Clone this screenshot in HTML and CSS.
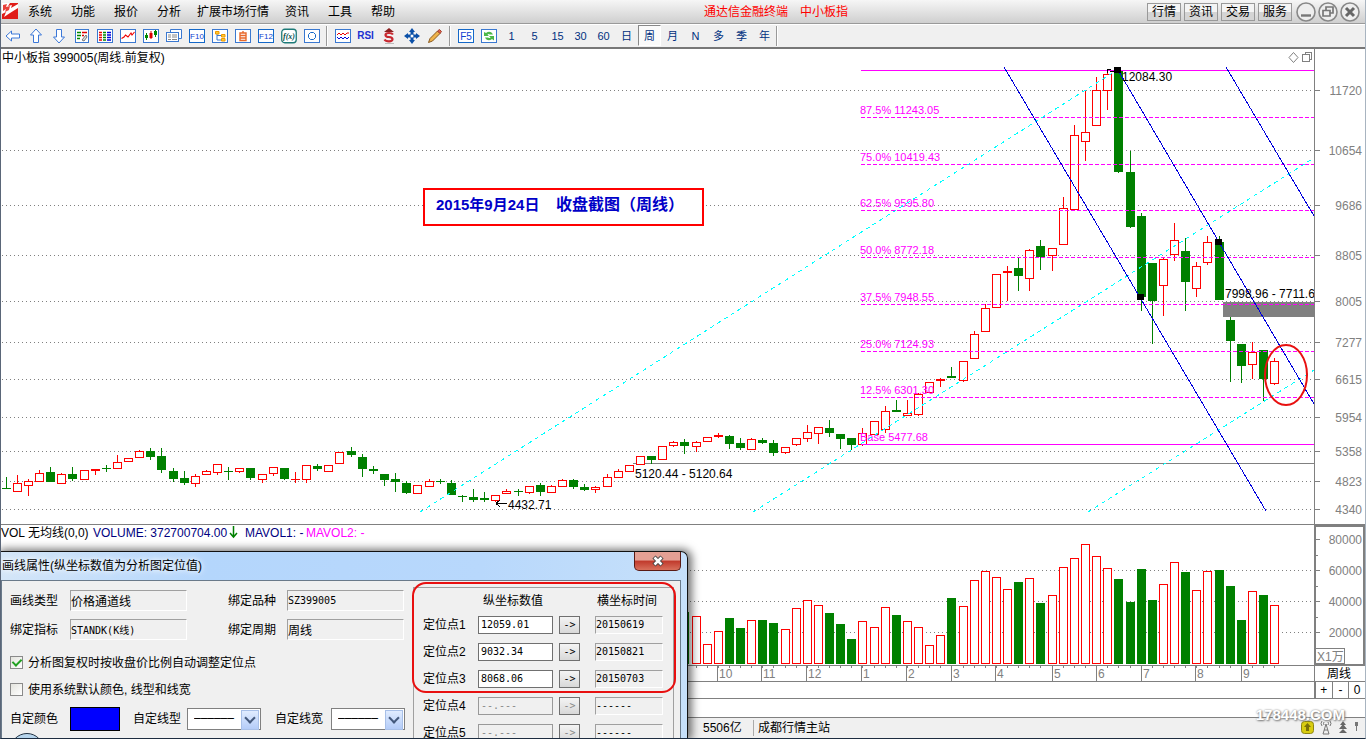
FILE: index.html
```html
<!DOCTYPE html>
<html lang="zh-CN">
<head>
<meta charset="utf-8">
<title>通达信金融终端</title>
<link rel="stylesheet" href="styles.css">
</head>
<body>
<div class="window">
  <header class="menubar">
    <svg class="logo" width="16" height="16" viewBox="0 0 16 16"><rect width="16" height="16" fill="#e01c18"/><path d="M0 0H8L6 3L10 2L9 5L16 1V5L8 10L2 14L4 9L0 11Z" fill="#fff"/><path d="M1 2L5 1L4 4L8 3L7 7L3 9L4 6L1 8Z" fill="#e8403a"/></svg>
    <nav class="menus">
      <button>系统</button><button>功能</button><button>报价</button><button>分析</button><button class="menu-wide">扩展市场行情</button><button>资讯</button><button>工具</button><button>帮助</button>
    </nav>
    <div class="caption"><span>通达信金融终端</span><span>中小板指</span></div>
    <div class="quick">
      <button>行情</button><button>资讯</button><button>交易</button><button>服务</button>
    </div>
    <div class="winbtns">
      <button aria-label="最小化"><svg width="20" height="20" viewBox="0 0 20 20"><circle cx="10" cy="10" r="9" fill="#eee" stroke="#888" stroke-width="1.6"/><path d="M5 13.5H15" stroke="#777" stroke-width="2.4"/></svg></button>
      <button aria-label="还原"><svg width="20" height="20" viewBox="0 0 20 20"><circle cx="10" cy="10" r="9" fill="#eee" stroke="#888" stroke-width="1.6"/><path d="M8 8V5H15V11H12M5 8.5H12V14H5Z" fill="none" stroke="#777" stroke-width="1.7"/></svg></button>
      <button aria-label="关闭"><svg width="20" height="20" viewBox="0 0 20 20"><circle cx="10" cy="10" r="9" fill="#eee" stroke="#888" stroke-width="1.6"/><path d="M6 6L14 14M14 6L6 14" stroke="#666" stroke-width="3"/></svg></button>
    </div>
  </header>

  <div class="toolbar">
    <button aria-label="后退"><svg viewBox="0 0 16 16"><path d="M1 8L6.500 3V6H14.500V10H6.500V13Z" fill="#fff" stroke="#3c78d8"/></svg></button>
    <button aria-label="上翻"><svg viewBox="0 0 16 16"><path d="M8 1L13.500 7H10.500V14.500H5.500V7H2.500Z" fill="#fff" stroke="#3c78d8"/></svg></button>
    <button aria-label="下翻"><svg viewBox="0 0 16 16"><path d="M8 15L13.500 9H10.500V1.500H5.500V9H2.500Z" fill="#fff" stroke="#3c78d8"/></svg></button>
    <button aria-label="自选"><svg viewBox="0 0 16 16"><rect x="1.500" y="1.500" width="13" height="13" fill="#fff" stroke="#3a78d0"/><path d="M3 4.500H7M3 7.500H7M3 10.500H6" stroke="#080" stroke-width="1.500"/><path d="M8 4.500H13M8 7.500H10" stroke="#d00" stroke-width="1.500"/><path d="M8 12L12 7L13 9L10 13Z" fill="#ddd" stroke="#777"/></svg></button>
    <button aria-label="行情表"><svg viewBox="0 0 16 16"><rect x=".5" y="1.500" width="15" height="13" fill="#fff" stroke="#3a78d0"/><path d="M2 4.500H5M2 7H5M2 9.500H5M2 12H5" stroke="#e00" stroke-width="1.500"/><path d="M6 4.500H9M6 7H9M6 9.500H9M6 12H9" stroke="#080" stroke-width="1.500"/><path d="M10 4.500H14M10 7H14M10 9.500H14M10 12H14" stroke="#00d" stroke-width="1.500"/></svg></button>
    <button aria-label="分时图"><svg viewBox="0 0 16 16"><rect x=".5" y="1.500" width="15" height="13" fill="#fff" stroke="#3a78d0"/><path d="M1.500 10.500L4 9L5.500 7L8 9L11 5L12 7L14.500 4" fill="none" stroke="#e00" stroke-width="1.100"/></svg></button>
    <button aria-label="K线图"><svg viewBox="0 0 16 16"><rect x=".5" y="1.500" width="15" height="13" fill="#fff" stroke="#3a78d0"/><path d="M3.500 5V12M12.500 2V9" stroke="#080"/><path d="M8 3V11" stroke="#d00"/><path d="M2 7H5V10H2ZM11 3H14V7H11Z" fill="#080"/><path d="M6.500 5H9.500V10H6.500Z" fill="#d00"/></svg></button>
    <button aria-label="多窗口"><svg viewBox="0 0 16 16"><path d="M4.500 4V1.500H15.500V10.500H13" fill="#fff" stroke="#3a78d0"/><rect x=".5" y="4.500" width="12" height="9" fill="#fff" stroke="#3a78d0"/><path d="M2 7H5M6 7H11M2 9H5M6 9H11M2 11.500H5M6 11.500H11" stroke="#888"/></svg></button>
    <button aria-label="F10"><svg viewBox="0 0 16 16"><rect x=".5" y="1.500" width="15" height="13" fill="#fff" stroke="#1468c8"/><text x="8" y="11" class="fkey">F10</text></svg></button>
    <button aria-label="板块树"><svg viewBox="0 0 16 16"><rect x=".5" y="1.500" width="15" height="13" fill="#fff" stroke="#3a78d0"/><path d="M5 6V12H9M5 7.500H9" fill="none" stroke="#3a78d0"/><path d="M3.500 3.500H7V6H3.500ZM9.500 6.500H13V9H9.500ZM9.500 10.500H13V13H9.500Z" fill="#fc3" stroke="#e90"/></svg></button>
    <button aria-label="自选股"><svg viewBox="0 0 16 16"><rect x=".5" y="1.500" width="15" height="13" fill="#fff" stroke="#3a78d0"/><path d="M8 3V5M5 5H11V12.500H5ZM5 7.500H11M5 10H11" fill="none" stroke="#e8692c" stroke-width="1.400"/></svg></button>
    <button aria-label="F12"><svg viewBox="0 0 16 16"><rect x=".5" y="1.500" width="15" height="13" fill="#fff" stroke="#1468c8"/><text x="8" y="11" class="fkey">F12</text></svg></button>
    <button aria-label="公式"><svg viewBox="0 0 16 16"><rect x=".75" y="1.250" width="14.500" height="13.500" rx="3" fill="#fff" stroke="#1d7a78" stroke-width="1.300"/><text x="8" y="11" class="fx">f(x)</text></svg></button>
    <button aria-label="圆"><svg viewBox="0 0 16 16"><rect x=".5" y="1.500" width="15" height="13" fill="#fff" stroke="#3a78d0"/><path d="M6.500 4.500H9.500L11.500 6.500V9.500L9.500 11.500H6.500L4.500 9.500V6.500Z" fill="none" stroke="#1468c8"/></svg></button>
    <i class="sep"></i>
    <button aria-label="叠加"><svg viewBox="0 0 16 16"><rect x=".5" y="1.500" width="15" height="13" fill="#fff" stroke="#3a78d0"/><path d="M2 7L4 5L6 7L8 5L10 7L12 5L14 5" fill="none" stroke="#e00"/><path d="M2 9L4 11L6 9L8 11L10 9L12 11L14 9" fill="none" stroke="#00d"/></svg></button>
    <button class="rsi">RSI</button>
    <button aria-label="资金"><svg viewBox="0 0 16 16"><path d="M8 0L13 4H3Z" fill="#8c2020"/><path d="M12 6.500Q11 5 8 5Q4.500 5 4.500 7Q4.500 9 8 9Q11.500 9.300 11.500 11.300Q11.500 13.300 8 13.300Q4.500 13.300 3.500 11.500" fill="none" stroke="#c82830" stroke-width="2.200"/><path d="M4 15.500H13" stroke="#bbb"/></svg></button>
    <button aria-label="移动"><svg viewBox="0 0 16 16"><path d="M8 0L11 4H9.500V6.500H12V5L16 8L12 11V9.500H9.500V12H11L8 16L5 12H6.500V9.500H4V11L0 8L4 5V6.500H6.500V4H5Z" fill="#0b50a8"/><circle cx="8" cy="8" r="1.500" fill="#fff"/></svg></button>
    <button aria-label="画线"><svg viewBox="0 0 16 16"><path d="M1.500 14.500L3 10.500L10.500 3L13 5.500L5.500 13Z" fill="#f0b44c" stroke="#8a5a20"/><path d="M10.500 3L12.500 1.500L14.500 3.500L13 5.500Z" fill="#e0604a" stroke="#a04030"/></svg></button>
    <i class="sep"></i>
    <button aria-label="F5"><svg viewBox="0 0 16 16"><rect x=".5" y="1.500" width="15" height="13" fill="#fff" stroke="#1468c8"/><text x="8" y="12" class="fkey f5">F5</text></svg></button>
    <button aria-label="刷新"><svg viewBox="0 0 16 16"><rect x=".5" y="1.500" width="15" height="13" fill="#fff" stroke="#3a78d0"/><path d="M3 8V4L5 5C8 2.500 11 4 12 6.500H9C7 5.500 7 6 6.500 6.500L8 8ZM13 8V12.500L11 11C8 13.500 5 12 4 9.500H7C9 10.500 9 10 9.500 9.500L8 8Z" fill="#4db848"/></svg></button>
    <button>1</button><button>5</button><button>15</button><button>30</button><button>60</button><button>日</button><button class="pressed">周</button><button>月</button><button>N</button><button>多</button><button>季</button><button>年</button>
    <i class="sep sep-end"></i>
  </div>

  <svg id="price" class="chart" viewBox="1 49 1364 475" role="img" aria-label="中小板指周线图"></svg>
  <svg id="volume" class="chart" viewBox="1 524 1364 158" role="img" aria-label="成交量"></svg>

  <div class="zoomrow">
    <div class="zoombtns"><button>+</button><button>-</button><button>0</button></div>
  </div>
  <div class="blankrow"></div>
  <footer class="status">
    <span class="turnover">5506亿</span>
    <span class="host">成都行情主站</span>
    <span class="tray">
      <svg width="13" height="14" viewBox="0 0 13 14"><rect x=".5" y=".5" width="12" height="12" rx="3" fill="#d8cc10" stroke="#8c8410"/><path d="M6.500 2L10 6H8V10H5V6H3Z" fill="#7a7008"/></svg>
      <svg width="12" height="16" viewBox="0 0 12 16"><path d="M6 4L3 14H9L6 4M4 10H8M2 1Q0 3.500 2 6M10 1Q12 3.500 10 6M4 2Q3 3.500 4 5M8 2Q9 3.500 8 5" fill="none" stroke="#777"/></svg>
      <svg width="10" height="14" viewBox="0 0 10 14"><path d="M5 0L8 4H2ZM5 3L9 8H1ZM5 8L9 12H1Z" fill="#666"/></svg>
      <svg width="5" height="14" viewBox="0 0 5 14"><path d="M1 1H4V5H1ZM2 5H3V10H2Z" fill="#777"/></svg>
    </span>
  </footer>
  <div class="watermark">178448.COM</div>

  <section class="dialog">
    <div class="dlg-title"><h1>画线属性(纵坐标数值为分析图定位值)</h1>
      <button class="dlg-close" aria-label="关闭"><svg width="14" height="12" viewBox="0 0 14 12"><path d="M3 2L11 10M11 2L3 10" stroke="#444" stroke-width="4.500"/><path d="M3.500 2.500L10.500 9.500M10.500 2.500L3.500 9.500" stroke="#fff" stroke-width="2.500"/></svg></button>
    </div>
    <div class="dlg-body">
      <div class="left">
        <div class="pair">
          <label for="kind">画线类型</label><input id="kind" class="field" readonly value="价格通道线">
          <label for="code" class="second">绑定品种</label><input id="code" class="field mono" readonly value="SZ399005">
        </div>
        <div class="pair">
          <label for="ind">绑定指标</label><input id="ind" class="field mono" readonly value="STANDK(K线)">
          <label for="per" class="second">绑定周期</label><input id="per" class="field" readonly value="周线">
        </div>
        <div class="checks">
          <label><input type="checkbox" checked>分析图复权时按收盘价比例自动调整定位点</label>
          <label><input type="checkbox">使用系统默认颜色, 线型和线宽</label>
        </div>
        <div class="custom">
          <label for="color">自定颜色</label><button id="color" class="swatch"></button>
          <label for="style" class="lstyle">自定线型</label>
          <span class="combo"><select id="style"><option>──────</option></select></span>
          <label for="width" class="lwidth">自定线宽</label>
          <span class="combo"><select id="width"><option>──────</option></select></span>
        </div>
        <div class="orb"></div>
      </div>
      <div class="points">
        <div class="phead"><span>纵坐标数值</span><span>横坐标时间</span></div>
        <div class="prow"><label for="p1">定位点1</label><input id="p1" class="num" value="12059.01"><button>-&gt;</button><input class="field mono" readonly aria-label="时间1" value="20150619"></div>
        <div class="prow"><label for="p2">定位点2</label><input id="p2" class="num" value="9032.34"><button>-&gt;</button><input class="field mono" readonly aria-label="时间2" value="20150821"></div>
        <div class="prow"><label for="p3">定位点3</label><input id="p3" class="num" value="8068.06"><button>-&gt;</button><input class="field mono" readonly aria-label="时间3" value="20150703"></div>
        <div class="prow"><label for="p4">定位点4</label><input id="p4" class="num" disabled value="--.---"><button disabled>-&gt;</button><input class="field mono" readonly aria-label="时间4" value="------"></div>
        <div class="prow"><label for="p5">定位点5</label><input id="p5" class="num" disabled value="--.---"><button disabled>-&gt;</button><input class="field mono" readonly aria-label="时间5" value="------"></div>
        <div class="marker"></div>
      </div>
    </div>
  </section>
</div>
<script src="chart.js"></script>
</body>
</html>
```
FILE: styles.css
```css
* { box-sizing: border-box; }
body {
  margin: 0;
  overflow: hidden;
  background: #fff;
  font: 12px/16px "Liberation Sans", "Noto Sans CJK SC", sans-serif;
  color: #000;
}
button, input, select { font: inherit; color: inherit; margin: 0; padding: 0; border: 0; background: none; border-radius: 0; }
.window {
  position: relative;
  display: flex;
  flex-direction: column;
  min-height: 100vh;
  overflow: hidden;
  border-left: 1px solid #5a6678;
  border-right: 1px solid #a8b4c0;
  border-bottom: 1px solid #1c2c40;
}

/* menu bar */
.menubar {
  display: flex;
  align-items: center;
  height: 24px;
  background: linear-gradient(#f6f6f6, #cfcfcf);
  border-bottom: 1px solid #9a9a9a;
}
.logo { margin: 0 10px 2px 1px; }
.menus { display: flex; gap: 19px; }
.menu-wide { margin: 0 -3px; }
.caption { flex: 1; display: flex; justify-content: center; gap: 12px; padding-left: 10px; color: #f00; }
.quick { display: flex; gap: 3px; }
.quick button {
  width: 34px;
  height: 18px;
  border: 1px solid #999;
  background: linear-gradient(#f4f4f4 50%, #d4d4d4 50%);
  line-height: 16px;
}
.winbtns { display: flex; gap: 2px; margin: 0 5px 0 4px; }
.winbtns svg { display: block; }

/* toolbar */
.toolbar {
  display: flex;
  height: 25px;
  background: #f0f0f0;
  border-top: 1px solid #fff;
  border-bottom: 2px solid #777;
}
.toolbar button {
  width: 23px;
  height: 21px;
  display: flex;
  align-items: center;
  justify-content: center;
  font-size: 11px;
  color: #003080;
}
.toolbar svg { width: 16px; height: 16px; }
.toolbar .rsi { font-weight: bold; font-size: 10px; color: #2030d0; }
.toolbar .pressed { background: #fafafa; border: 1px solid #fff; border-left-color: #888; border-top-color: #888; }
.sep { width: 2px; height: 20px; margin: 1px 3px; border-left: 1px solid #999; border-right: 1px solid #fff; }
.sep-end { margin-left: 0; }
.fkey { font: 8px "Liberation Sans", sans-serif; fill: #1040d0; text-anchor: middle; }
.f5 { font-size: 10px; }
.fx { font: italic bold 8px "Liberation Serif", serif; fill: #004c4c; text-anchor: middle; }

/* charts */
.chart { display: block; width: 100%; height: auto; }
.chart text { font: 12px "Liberation Sans", "Noto Sans CJK SC", sans-serif; }
.chart text.lvl { font-size: 11px; fill: #f0f; }
.chart text.axis { fill: #808080; text-anchor: end; }
.chart text.month { fill: #808080; }
.chart text.note1 { font-size: 15px; font-weight: bold; fill: #0000c8; }
.chart text.note2 { font-size: 16px; font-weight: bold; fill: #0000c8; }
.crisp { shape-rendering: crispEdges; }
.grid { stroke: #808080; stroke-dasharray: 1 3; }
.frame { stroke: #808080; fill: none; }
.up { stroke: #f00; fill: #fff; }
.down { stroke: #008000; fill: #008000; }

/* rows below the charts */
.zoomrow { display: flex; justify-content: flex-end; height: 17px; border-bottom: 1px solid #808080; }
.zoombtns { display: flex; width: 51px; border-left: 2px solid #808080; }
.zoombtns button { flex: 1; border-left: 1px solid #808080; line-height: 15px; font-size: 12px; }
.zoombtns button:first-child { border-left: 0; }
.blankrow { height: 19px; border-bottom: 1px solid #808080; }
.status { flex: 1; display: flex; align-items: center; min-height: 20px; background: #f0f0f0; padding-left: 702px; }
.turnover { width: 51px; border-right: 1px solid #aaa; }
.host { padding-left: 4px; }
.tray { margin-left: auto; display: flex; gap: 6px; align-items: center; padding-right: 6px; }
.tray svg { display: block; }
.watermark {
  position: absolute;
  right: 20px;
  bottom: 12px;
  font: bold 15px/22px "Liberation Sans", sans-serif;
  color: #fff;
  text-shadow: 0 0 2px #888, 1px 1px 2px #777;
}

/* line properties dialog */
.dialog {
  position: absolute;
  left: -1px;
  top: 551px;
  bottom: 0;
  width: 688px;
  border: 1px solid #111;
  border-width: 1px 1px 0 0;
  border-radius: 0 7px 0 0;
  background: linear-gradient(90deg, #d4e6f8, #b4d6fc 30%, #b8d8fc 70%, #c6e0fa);
  box-shadow: 2px 0 8px 2px rgba(0, 0, 0, .55);
  padding: 0 6px 0 1px;
  display: flex;
  flex-direction: column;
}
.dlg-title { display: flex; justify-content: space-between; height: 28px; }
.dlg-title h1 { margin: 6px 0 0 1px; font-size: 12px; font-weight: normal; line-height: 16px; text-shadow: 0 0 5px #fff, 0 0 8px #fff; }
.dlg-close {
  width: 47px;
  height: 19px;
  border: 1px solid #5a1a14;
  border-top: 0;
  border-radius: 0 0 5px 5px;
  background: linear-gradient(#e4a094 45%, #c0392b 50%, #d8705c);
  display: flex;
  align-items: center;
  justify-content: center;
}
.dlg-body {
  flex: 1;
  min-height: 0;
  overflow: hidden;
  display: flex;
  align-items: flex-start;
  background: #f0f0f0;
  border: 1px solid #6a7a8a;
  border-bottom: 0;
}
.left { position: relative; width: 411px; padding: 9px 8px 0 8px; display: flex; flex-direction: column; gap: 8px; }
.pair, .custom { display: flex; align-items: center; }
.pair label { width: 60px; }
.pair .second { width: 59px; margin-left: 41px; }
.field {
  width: 117px;
  height: 21px;
  border: 1px solid #fff;
  border-left-color: #a0a0a0;
  border-top-color: #a0a0a0;
}
.mono { font: 10px/16px "DejaVu Sans Mono", "Noto Sans CJK SC", monospace; }
.checks { display: flex; flex-direction: column; gap: 8px; margin-top: 5px; }
.checks label { display: flex; align-items: center; height: 19px; gap: 5px; }
.checks input {
  appearance: none;
  width: 13px;
  height: 13px;
  border: 1px solid #8a8a8a;
  background: linear-gradient(135deg, #e4e4de, #fff);
  display: grid;
  place-items: center;
}
.checks input:checked::before {
  content: "";
  width: 4px;
  height: 7px;
  margin-bottom: 2px;
  border: solid #21a121;
  border-width: 0 2px 2px 0;
  transform: rotate(45deg);
}
.custom { height: 24px; }
.swatch { width: 50px; height: 24px; margin-left: 12px; background: #00f; border: 1px solid #000; }
.lstyle { margin: 0 6px 0 13px; }
.lwidth { margin: 0 8px 0 14px; }
.combo { position: relative; display: block; width: 74px; height: 22px; }
.combo select {
  appearance: none;
  width: 100%;
  height: 22px;
  border: 1px solid #808080;
  background: #fff;
  padding-left: 6px;
  font: 11px/18px "DejaVu Sans Mono", monospace;
}
.combo::before {
  content: "";
  position: absolute;
  right: 2px;
  top: 2px;
  width: 16px;
  height: 18px;
  border: 1px solid #a8c0e8;
  background: linear-gradient(#e0ecff, #b4ccf8);
}
.combo::after {
  content: "";
  position: absolute;
  right: 7px;
  top: 6px;
  width: 6px;
  height: 6px;
  border: solid #44597c;
  border-width: 0 2px 2px 0;
  transform: rotate(45deg);
}
.orb { position: absolute; left: 8px; top: 152px; width: 34px; height: 34px; border-radius: 50%; border: 1px solid #234; background: linear-gradient(#bcd8ee, #7cb0d8); }
.points { position: relative; width: 261px; margin-top: 6px; border: 1px solid #a0a0a0; border-bottom: 0; padding-left: 9px; }
.phead { display: flex; height: 23px; line-height: 26px; padding-left: 60px; gap: 54px; }
.prow { display: flex; align-items: center; height: 27px; }
.prow label { width: 55px; }
.num {
  width: 75px;
  height: 18px;
  border: 1px solid #707070;
  background: #fff;
  padding-left: 2px;
  font: 10px/16px "DejaVu Sans Mono", monospace;
}
.prow button {
  width: 21px;
  height: 18px;
  margin: 0 15px 0 6px;
  border: 1px solid #707070;
  background: linear-gradient(#f4f4f4, #d8d8d8);
  font: 10px/14px "DejaVu Sans Mono", monospace;
}
.prow .field { width: 68px; height: 18px; }
.num:disabled { background: #f0f0f0; color: #888; border-color: #999; }
.prow button:disabled { color: #888; }
.marker { position: absolute; left: -2px; top: -6px; width: 264px; height: 111px; border: 2px solid #e81010; border-radius: 14px; pointer-events: none; }
```
FILE: chart.js
```js
// Weekly candles: [centre x, high, body top, body bottom, low, u(p)/d(own)]
const candles = [
[6,477,488,489,489,'d'],[17,475,483,492,492,'u'],[28,479,481,486,496,'u'],[39,470,473,482,482,'u'],[50,467,472,482,482,'d'],
[61,473,474,484,484,'u'],[72,467,474,479,481,'d'],[84,470,470,480,480,'u'],[95,469,469,471,475,'u'],[106,465,468,469,472,'d'],
[117,455,462,469,469,'u'],[128,458,458,462,462,'u'],[139,450,451,458,458,'u'],[150,448,451,457,460,'d'],[161,448,456,470,473,'d'],
[173,468,471,479,482,'d'],[184,471,478,483,485,'d'],[195,474,476,484,487,'u'],[206,470,471,475,475,'u'],[217,464,464,473,475,'u'],
[228,467,471,472,480,'d'],[239,468,468,472,473,'u'],[250,468,468,478,480,'d'],[262,474,474,480,483,'u'],[273,467,467,474,476,'u'],
[284,468,468,479,480,'d'],[295,472,479,480,483,'u'],[306,465,465,480,483,'u'],[317,464,466,469,471,'d'],[328,465,465,472,472,'u'],
[339,452,452,464,464,'u'],[351,447,451,455,457,'d'],[362,454,457,469,477,'d'],[373,466,469,471,474,'d'],[384,474,474,480,486,'d'],
[395,473,479,482,492,'d'],[406,481,483,493,494,'d'],[417,485,485,494,494,'u'],[429,479,481,487,487,'u'],[440,479,481,482,484,'d'],
[451,480,483,495,495,'d'],[462,495,496,497,502,'d'],[473,489,497,500,502,'d'],[484,492,498,500,502,'d'],[495,495,495,501,502,'u'],
[506,489,491,494,494,'u'],[518,489,491,492,496,'d'],[529,486,486,493,494,'u'],[540,483,485,492,496,'d'],[551,485,486,493,493,'u'],
[562,479,480,487,487,'u'],[573,479,480,487,489,'d'],[584,484,487,490,491,'d'],[595,486,487,490,493,'u'],[607,474,477,487,487,'u'],
[618,469,471,478,478,'u'],[629,465,465,472,472,'u'],[640,456,456,465,465,'u'],[651,456,456,460,464,'d'],[662,446,446,460,460,'u'],
[673,441,442,446,447,'u'],[684,439,442,446,454,'d'],[696,441,442,447,452,'u'],[707,437,437,442,442,'u'],[718,433,435,437,438,'u'],
[729,435,436,444,449,'d'],[740,438,443,448,450,'d'],[751,438,439,450,450,'u'],[762,438,440,443,444,'d'],[773,440,443,453,456,'d'],
[785,447,447,453,454,'u'],[796,438,438,445,446,'u'],[807,425,432,439,442,'u'],[818,427,427,434,444,'u'],[829,420,428,433,437,'d'],
[840,434,434,439,449,'d'],[851,438,438,445,450,'d'],[862,428,433,445,446,'u'],[874,421,421,435,435,'u'],[885,406,411,430,433,'u'],
[896,400,410,412,412,'d'],[907,400,413,416,416,'u'],[918,393,394,415,416,'u'],[929,382,382,393,393,'u'],[940,378,379,381,387,'u'],
[951,367,376,378,378,'d'],[963,361,361,381,382,'u'],[974,331,334,359,359,'u'],[985,304,308,332,332,'u'],[996,274,274,308,308,'u'],
[1007,266,271,273,301,'u'],[1018,258,268,276,291,'d'],[1029,249,250,279,291,'u'],[1040,240,246,257,270,'d'],[1052,248,248,256,271,'u'],
[1063,197,208,245,245,'u'],[1074,125,135,210,210,'u'],[1085,91,132,142,161,'u'],[1096,77,90,126,126,'u'],[1107,71,74,91,110,'u'],
[1118,71,71,172,173,'d'],[1130,151,172,227,228,'d'],[1141,213,216,297,311,'d'],[1152,263,263,301,344,'d'],[1163,257,259,286,316,'u'],
[1174,223,240,255,261,'u'],[1185,238,251,282,311,'d'],[1196,262,266,289,297,'u'],[1207,236,242,263,265,'u'],[1219,236,242,300,300,'d'],
[1230,317,320,341,382,'d'],[1241,344,344,366,383,'d'],[1252,342,352,365,379,'u'],[1263,350,350,379,401,'d'],[1274,358,361,384,385,'u']
];
// Bar tops for the last weeks, aligned with the end of the candle list
const volumes = [612,616,644,631,618,628,620,620,623,629,608,600,605,613,624,639,621,627,607,615,621,627,645,635,598,606,580,571,577,589,582,578,603,595,567,558,544,556,568,579,602,569,600,584,562,572,590,571,570,586,620,591,595,605];

const line = (x1, y1, x2, y2, cls, extra = '') => `<path class="${cls}" d="M${x1} ${y1}L${x2} ${y2}" fill="none" ${extra}/>`;
const h = (y, x1, x2, cls, extra) => line(x1, y + .5, x2, y + .5, 'crisp ' + cls, extra);
const v = (x, y1, y2, cls, extra) => line(x + .5, y1, x + .5, y2, 'crisp ' + cls, extra);
const text = (x, y, s, cls = '', extra = '') => `<text x="${x}" y="${y}" class="${cls}" ${extra}>${s}</text>`;

let p = '';
[[90, 11720], [150, 10654], [205, 9686], [255, 8805], [301, 8005], [342, 7277], [379, 6615], [417, 5954], [451, 5358], [481, 4823], [509, 4340]].forEach(([y, n]) => {
  p += h(y, 2, 1314, 'grid') + h(y, 1315, 1320, 'frame') + text(1362, y + 5, n, 'axis');
});
p += h(463, 633, 1314, 'frame');
p += '<rect x="1223" y="302" width="91" height="15" fill="#808080"/>';
candles.forEach(([x, hi, t, b, lo, k]) => {
  const c = k === 'u' ? 'up' : 'down';
  p += v(x, hi, lo, c);
  p += b - t < 2 ? h(t, x - 4, x + 5, c)
    : `<rect class="crisp ${c}" x="${x - 3.5}" y="${t + .5}" width="8" height="${b - t - 1}"/>`;
});
p += h(70, 861, 1314, '', 'stroke="#f0f"') + h(444, 861, 1314, '', 'stroke="#f0f"');
[[117, '87.5% 11243.05'], [164, '75.0% 10419.43'], [210, '62.5% 9595.80'], [257, '50.0% 8772.18'], [304, '37.5% 7948.55'], [351, '25.0% 7124.93'], [397, '12.5% 6301.30']].forEach(([y, s]) => {
  p += h(y, 861, 1314, '', 'stroke="#f0f" stroke-dasharray="4 2"') + text(860, y - 3, s, 'lvl');
});
p += text(860, 441, 'Base 5477.68', 'lvl');
[[420, 512, 1117, 70], [753, 512, 1314, 158], [1088, 512, 1314, 370]].forEach(a => {
  p += line(...a, 'crisp', 'stroke="#0ff" stroke-dasharray="4 4"');
});
[[1004, 67, 1266, 511], [1118, 70, 1314, 404], [1226, 67, 1314, 216]].forEach(a => {
  p += line(...a, 'crisp', 'stroke="#00d"');
});
[[1114, 67], [1137, 294], [1215, 239]].forEach(([x, y]) => { p += `<rect x="${x}" y="${y}" width="7" height="6"/>`; });
p += text(1122, 81, '12084.30') + text(508, 509, '4432.71') + text(635, 478, '5120.44 - 5120.64');
p += '<path d="M507 503.500H496M496 503.500L500 500M496 503.500L500 507M1107 73V69H1111M1110 71H1114" fill="none" stroke="#000" class="crisp"/>';
p += text(1225, 298, '7998.96 - 7711.65', '', 'clip-path="url(#plot)"') + '<clipPath id="plot"><rect x="0" y="49" width="1314" height="475"/></clipPath>';
p += '<ellipse cx="1286" cy="375" rx="21" ry="30" fill="none" stroke="#e81010" stroke-width="2"/>';
p += '<rect x="424" y="189" width="279" height="36" fill="#fff" stroke="#f00" stroke-width="2" class="crisp"/>';
p += text(436, 210, '2015年9月24日', 'note1') + text(556, 210, '收盘截图（周线）', 'note2');
p += text(2, 62, '中小板指 399005(周线.前复权)');
p += '<path d="M1293.500 52.500L1298 57.500L1293.500 62.500L1289 57.500Z" fill="none" stroke="#808080"/><path d="M1302.500 54.500H1309.500V61.500H1302.500ZM1305 54V52.500H1311.500V59.500H1310" fill="none" stroke="#808080" class="crisp"/>';
p += v(1314, 49, 524, 'frame');
document.getElementById('price').innerHTML = p;

let q = h(524, 1, 1365, 'frame');
q += text(1, 537, 'VOL 无均线(0,0)') + text(93, 537, 'VOLUME: 372700704.00', '', 'fill="#000080"') + text(245, 537, 'MAVOL1: -', '', 'fill="#000080"') + text(306, 537, 'MAVOL2: -', '', 'fill="#f0f"');
q += '<path d="M233.500 526V537M230 533L233.500 537L237 533" fill="none" stroke="#008000" stroke-width="1.500"/>';
[570, 601, 632].forEach(y => { q += h(y, 2, 1314, 'grid'); });
[[539, 80000], [570, 60000], [601, 40000], [632, 20000]].forEach(([y, n]) => { q += h(y, 1315, 1320, 'frame') + h(y + 16, 1315, 1318, 'frame') + text(1362, y + 5, n, 'axis'); });
const start = candles.length - volumes.length;
volumes.forEach((t, i) => {
  const [x, , , , , k] = candles[start + i];
  q += `<rect class="crisp ${k === 'u' ? 'up' : 'down'}" x="${x - 3.5}" y="${t + .5}" width="8" height="${663 - t}"/>`;
  q += v(x, 665, 668, 'frame');
});
q += h(665, 1, 1365, 'frame') + h(681, 1, 1365, 'frame');
[[717, 10], [761, 11], [806, 12], [861, 1], [906, 2], [951, 3], [995, 4], [1052, 5], [1096, 6], [1141, 7], [1195, 8], [1241, 9]].forEach(([x, m]) => {
  q += v(x, 665, 681, 'frame') + text(x + 2, 678, m, 'month');
});
q += '<rect class="frame crisp" x="1315" y="525.500" width="49" height="139" stroke-width="2"/><rect class="crisp frame" x="1315.500" y="648.500" width="29" height="15" fill="#fff"/>';
q += v(1314, 665, 682, 'frame') + text(1317, 661, 'X1万', 'month') + text(1327, 678, '周线');
document.getElementById('volume').innerHTML = q;
```
